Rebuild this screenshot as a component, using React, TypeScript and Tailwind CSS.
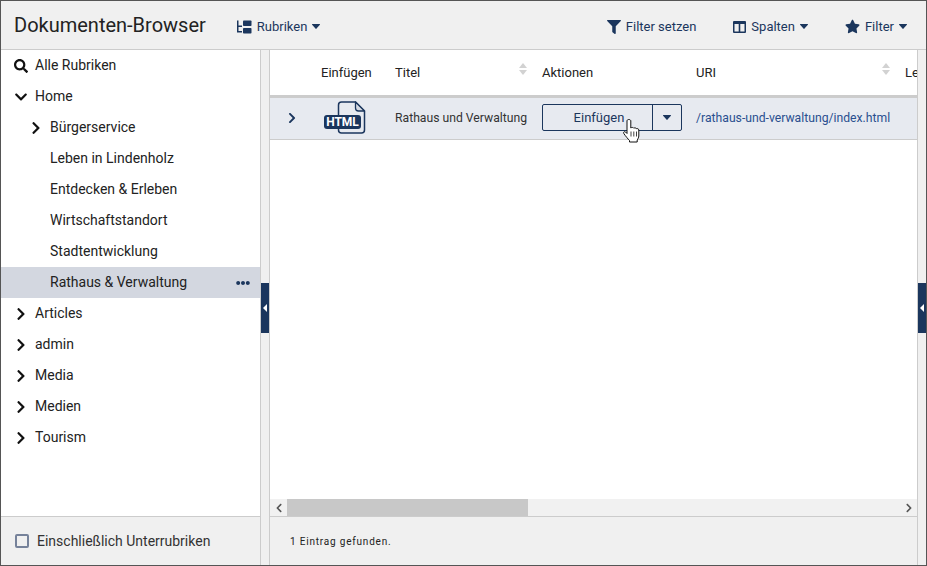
import { FaChevronDown, FaChevronRight, FaEllipsisH, FaFilter, FaSearch, FaStar } from "react-icons/fa"

const navy = "text-[#1b365d]"

function Caret() {
  return (
    <svg width="8" height="5" viewBox="0 0 8 5" className="text-[#1b365d]">
      <path d="M0.400 0h7.200a.4.4 0 0 1 .3.700L4.300 4.800a.4.4 0 0 1-.6 0L.1.700A.4.4 0 0 1 .4 0z" fill="currentColor" />
    </svg>
  )
}

function RubrikenIcon() {
  return (
    <svg width="16" height="14" viewBox="0 0 16 14" className="text-[#1b365d]">
      <path d="M1 0.500h1.500v5h3.500v1.500h-3.500v4h3.500v1.500h-5z" fill="currentColor" />
      <rect x="7" y="0.500" width="8.500" height="5.500" rx="0.800" fill="currentColor" />
      <rect x="7" y="8" width="8.500" height="5.500" rx="0.800" fill="currentColor" />
    </svg>
  )
}

function ColumnsIcon() {
  return (
    <svg width="13" height="12" viewBox="0 0 13 12" className="text-[#1b365d]">
      <path fillRule="evenodd" d="M1 0h11a1 1 0 0 1 1 1v10a1 1 0 0 1-1 1H1a1 1 0 0 1-1-1V1a1 1 0 0 1 1-1zM1.500 3v7.500h4.200V3zM7.300 3v7.500h4.200V3z" fill="currentColor" />
    </svg>
  )
}

function HtmlIcon() {
  return (
    <svg width="42" height="33" viewBox="0 0 42 33">
      <path d="M14.500 14V4a3 3 0 0 1 3-3h14l9 9v19a3 3 0 0 1-3 3H17.500a3 3 0 0 1-3-3v-1" fill="none" stroke="#1b365d" strokeWidth="1.500" />
      <path d="M31.500 1v6a3 3 0 0 0 3 3h6z" fill="#d5dae3" stroke="#1b365d" strokeWidth="1.300" strokeLinejoin="round" />
      <rect x="0" y="14" width="37" height="14" rx="3" fill="#1b365d" />
      <text x="18.500" y="25.300" textAnchor="middle" fontFamily="Roboto, sans-serif" fontSize="12" fontWeight="700" fill="#fff">HTML</text>
    </svg>
  )
}

function HandCursor() {
  return (
    <svg width="18" height="24" viewBox="0 0 18 24" className="absolute left-[81px] top-[15px]">
      <path
        d="M4 2c0-1 .8-1.500 1.800-1.500s2 .5 2 1.500V9h.2c.5-.8 2.400-.8 2.800.2.600-.6 2.200-.5 2.600.5.800-.4 2.400 0 2.400 1.300V17c0 1.500-1 3-1.600 4v2H6.500v-1.500C5 20 2.500 17 .8 14.500c-.8-1.200.6-2.500 1.800-1.500L4 14.500z"
        fill="#fff"
        stroke="#111"
        strokeWidth="1"
        strokeLinejoin="round"
      />
      <path d="M8 12.500v5M10.800 12.500v5M13.500 12.500v5" stroke="#111" strokeWidth="0.800" />
    </svg>
  )
}

function SortArrows() {
  return (
    <svg width="8" height="12" viewBox="0 0 8 12" className="absolute right-[15px] top-[-2px]">
      <path d="M4 0l4 5H0z" fill="#d2d2d2" />
      <path d="M4 12l4-5H0z" fill="#d2d2d2" />
    </svg>
  )
}

function Handle() {
  return (
    <div className="flex h-[50px] w-[8px] items-center justify-center bg-[#1b365d]">
      <svg width="4" height="8" viewBox="0 0 4 8">
        <path d="M4 0v8L0 4z" fill="#fff" />
      </svg>
    </div>
  )
}

function ToolbarItem({ icon, label, caret }: { icon: React.ReactNode; label: string; caret?: boolean }) {
  return (
    <div className={`mt-[3px] flex items-center gap-[5px] text-[13px] ${navy}`}>
      {icon}
      <span>{label}</span>
      {caret && <Caret />}
    </div>
  )
}

function TreeRow({ label, level, state, selected }: { label: string; level: number; state?: "open" | "closed"; selected?: boolean }) {
  return (
    <div className={`flex h-[31px] items-center pr-[10px] text-[14px] text-[#222] ${selected ? "bg-[#d3d7e0]" : ""} ${level === 1 ? "pl-[28px]" : "pl-[13px]"}`}>
      <span className="flex w-[21px] shrink-0 items-center">
        {state === "open" && <FaChevronDown size={14} className="text-[#111]" />}
        {state === "closed" && <FaChevronRight size={14} className="text-[#111]" />}
      </span>
      <span className="flex-1">{label}</span>
      {selected && <FaEllipsisH size={14} className="text-[#1b365d]" />}
    </div>
  )
}

export default function App() {
  const children = ["Leben in Lindenholz", "Entdecken & Erleben", "Wirtschaftstandort", "Stadtentwicklung"]
  const roots = ["Articles", "admin", "Media", "Medien", "Tourism"]

  return (
    <div className="flex h-[566px] w-[927px] flex-col overflow-hidden border border-[#555] bg-[#f0f0f0] font-['Roboto',sans-serif]">
      {/* Top bar */}
      <header className="flex h-[49px] shrink-0 items-center border-b border-[#ccc] pl-[13px] pr-[19px]">
        <h1 className="text-[20px] leading-none text-[#222]">Dokumenten-Browser</h1>
        <div className="ml-[30px]">
          <ToolbarItem icon={<RubrikenIcon />} label="Rubriken" caret />
        </div>
        <div className="ml-auto flex items-center gap-[37px]">
          <ToolbarItem icon={<FaFilter size={14} />} label="Filter setzen" />
          <ToolbarItem icon={<ColumnsIcon />} label="Spalten" caret />
          <ToolbarItem icon={<FaStar size={15} />} label="Filter" caret />
        </div>
      </header>

      <div className="flex min-h-0 flex-1">
        {/* Sidebar */}
        <aside className="flex w-[259px] shrink-0 flex-col">
          <div className="flex-1 bg-white">
            <div className="flex h-[31px] items-center pl-[13px] text-[14px] text-[#222]">
              <span className="flex w-[21px] items-center">
                <FaSearch size={14} className="text-[#111]" />
              </span>
              Alle Rubriken
            </div>
            <TreeRow label="Home" level={0} state="open" />
            <TreeRow label="Bürgerservice" level={1} state="closed" />
            {children.map((c) => (
              <TreeRow key={c} label={c} level={1} />
            ))}
            <TreeRow label="Rathaus & Verwaltung" level={1} selected />
            {roots.map((r) => (
              <TreeRow key={r} label={r} level={0} state="closed" />
            ))}
          </div>
          <div className="flex h-[49px] shrink-0 items-center gap-[8px] border-t border-[#ccc] pl-[14px] text-[14px] text-[#333]">
            <span className="h-[14px] w-[14px] rounded-[2px] border-2 border-[#76829a] bg-[#f0f0f0]" />
            Einschließlich Unterrubriken
          </div>
        </aside>

        {/* Left gutter */}
        <div className="flex w-[10px] shrink-0 items-center border-x border-[#ccc]">
          <Handle />
        </div>

        {/* Main */}
        <main className="flex min-w-0 flex-1 flex-col">
          <div className="flex min-h-0 flex-1 flex-col overflow-hidden bg-white">
            <div className="grid h-[48px] shrink-0 grid-cols-[51px_74px_147px_154px_209px_40px] items-center border-b-[3px] border-[#ccc] text-[13px] leading-[15px] text-[#222]">
              <span />
              <span>Einfügen</span>
              <span className="relative">
                Titel
                <SortArrows />
              </span>
              <span>Aktionen</span>
              <span className="relative">
                URI
                <SortArrows />
              </span>
              <span className="whitespace-nowrap">Le</span>
            </div>
            <div className="grid h-[42px] shrink-0 grid-cols-[51px_74px_147px_154px_209px_40px] items-center border-b border-[#ccc] bg-[#e7eaf0] pb-[2px] text-[12.200px]">
              <span className="flex justify-center pr-[7px]">
                <FaChevronRight size={12} className={navy} />
              </span>
              <span className="pl-[3px]">
                <HtmlIcon />
              </span>
              <span className="mt-[1px] whitespace-nowrap text-[#333]">Rathaus und Verwaltung</span>
              <div className="relative">
                <div className={`flex h-[27px] w-[140px] items-center rounded-[2px] border border-[#1b365d] text-[13px] ${navy}`}>
                  <span className="flex-1 pl-[3px] text-center">Einfügen</span>
                  <span className="flex h-full w-[29px] items-center justify-center border-l border-[#1b365d]">
                    <Caret />
                  </span>
                </div>
                <HandCursor />
              </div>
              <span className="mt-[1px] whitespace-nowrap text-[#2a4f8f]">/rathaus-und-verwaltung/index.html</span>
            </div>
            <div className="flex-1" />
            {/* Horizontal scrollbar */}
            <div className="flex h-[17px] shrink-0 items-center bg-[#f1f1f1]">
              <span className="flex w-[17px] justify-center">
                <FaChevronRight size={10} className="rotate-180 text-[#555]" />
              </span>
              <span className="h-full w-[241px] bg-[#c8c8c8]" />
              <span className="ml-auto flex w-[17px] justify-center">
                <FaChevronRight size={10} className="text-[#555]" />
              </span>
            </div>
          </div>
          <div className="flex h-[49px] shrink-0 items-center border-t border-[#ccc] pl-[20px] text-[10px] tracking-[0.8px] text-[#222]">
            1 Eintrag gefunden.
          </div>
        </main>

        {/* Right gutter */}
        <div className="flex w-[9px] shrink-0 items-center border-l border-[#ccc]">
          <Handle />
        </div>
      </div>
    </div>
  )
}
